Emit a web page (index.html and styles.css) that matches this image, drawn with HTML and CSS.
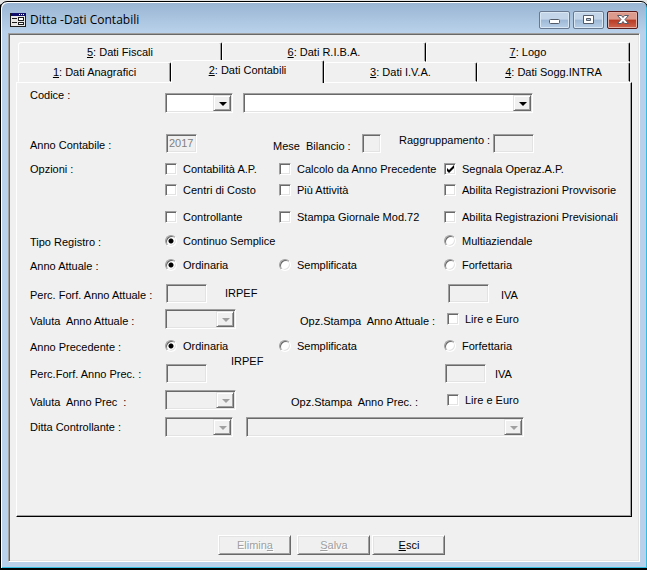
FILE: index.html
```html
<!DOCTYPE html>
<html lang="it">
<head>
<meta charset="utf-8">
<title>Ditta -Dati Contabili</title>
<link rel="stylesheet" href="styles.css">
</head>
<body>
<main class="window">
  <header class="titlebar">
    <svg class="app-icon" width="16" height="14" viewBox="0 0 16 14" shape-rendering="crispEdges" aria-hidden="true">
      <rect width="16" height="14" fill="#1c1c1c"/>
      <rect x="1" y="3" width="14" height="10" fill="#e8e8e8"/>
      <rect x="1" y="0" width="14" height="3" fill="#10106c"/>
      <path fill="#fff" d="M9 1h1v1H9zM11 1h1v1h-1zM13 1h1v1h-1z"/>
      <path fill="#1c1c1c" d="M2 5h5v1H2zM2 9h5v1H2zM8 4h6v4H8zM8 9h6v3H8z"/>
      <path fill="#fff" d="M9 5h4v2H9zM9 10h4v1H9z"/>
    </svg>
    <h1>Ditta -Dati Contabili</h1>
    <div class="caption-buttons">
      <button type="button" class="caption" aria-label="Riduci a icona">
        <svg width="29" height="16" viewBox="0 0 29 16"><rect x="9.500" y="7.500" width="10" height="4" rx="1" fill="#fff" stroke="#535a68"/></svg>
      </button>
      <button type="button" class="caption" aria-label="Ingrandisci">
        <svg width="29" height="16" viewBox="0 0 29 16"><path d="M9.500 3.500h10v8h-10zM12.500 6.500v2h4v-2z" fill="#fff" fill-rule="evenodd" stroke="#535a68"/></svg>
      </button>
      <button type="button" class="caption close" aria-label="Chiudi">
        <svg width="29" height="16" viewBox="0 0 29 16"><path d="M9.500 3.500h4l1.500 2 1.500-2h4l-3.500 4 3.500 4h-4l-1.500-2-1.500 2h-4l3.500-4z" fill="#fff" stroke="#535a68"/></svg>
      </button>
    </div>
  </header>

  <form class="client">
    <div class="tabs" role="tablist">
      <div class="tab-row">
        <button type="button" role="tab"><u>5</u>: Dati Fiscali</button>
        <button type="button" role="tab"><u>6</u>: Dati R.I.B.A.</button>
        <button type="button" role="tab"><u>7</u>: Logo</button>
      </div>
      <div class="tab-row front">
        <button type="button" role="tab"><u>1</u>: Dati Anagrafici</button>
        <button type="button" role="tab" class="active" aria-selected="true"><u>2</u>: Dati Contabili</button>
        <button type="button" role="tab"><u>3</u>: Dati I.V.A.</button>
        <button type="button" role="tab"><u>4</u>: Dati Sogg.INTRA</button>
      </div>
    </div>

    <section class="panel" role="tabpanel">
      <div class="row code">
        <label for="codice">Codice :</label>
        <span class="combo short"><select id="codice"><option></option></select></span>
        <span class="combo"><select aria-label="Descrizione ditta"><option></option></select></span>
      </div>

      <div class="row year">
        <label class="name" for="anno">Anno Contabile :</label>
        <input class="field small" id="anno" type="text" value="2017" disabled>
        <label class="low" for="mese">Mese  Bilancio :</label>
        <input class="field tiny" id="mese" type="text" disabled>
        <label class="high" for="ragg">Raggruppamento :</label>
        <input class="field" id="ragg" type="text" disabled>
      </div>

      <div class="row options">
        <span>Opzioni :</span>
        <label class="choice"><input type="checkbox">Contabilità A.P.</label>
        <label class="choice"><input type="checkbox">Calcolo da Anno Precedente</label>
        <label class="choice"><input type="checkbox" checked>Segnala Operaz.A.P.</label>
      </div>
      <div class="row options next">
        <span></span>
        <label class="choice"><input type="checkbox">Centri di Costo</label>
        <label class="choice"><input type="checkbox">Più Attività</label>
        <label class="choice"><input type="checkbox">Abilita Registrazioni Provvisorie</label>
      </div>
      <div class="row options last">
        <span></span>
        <label class="choice"><input type="checkbox">Controllante</label>
        <label class="choice"><input type="checkbox">Stampa Giornale Mod.72</label>
        <label class="choice"><input type="checkbox">Abilita Registrazioni Previsionali</label>
      </div>

      <div class="row radios register" role="radiogroup" aria-labelledby="registro">
        <span class="name" id="registro">Tipo Registro :</span>
        <label class="choice wide"><input type="radio" name="registro" checked>Continuo Semplice</label>
        <label class="choice"><input type="radio" name="registro">Multiaziendale</label>
      </div>
      <div class="row radios" role="radiogroup" aria-labelledby="attuale">
        <span class="name" id="attuale">Anno Attuale :</span>
        <label class="choice"><input type="radio" name="attuale" checked>Ordinaria</label>
        <label class="choice"><input type="radio" name="attuale">Semplificata</label>
        <label class="choice"><input type="radio" name="attuale">Forfettaria</label>
      </div>

      <div class="row percent">
        <label class="name" for="irpef1">Perc. Forf. Anno Attuale :</label>
        <input class="field" id="irpef1" type="text" disabled>
        <span class="unit">IRPEF</span>
        <input class="field" type="text" aria-label="IVA anno attuale" disabled>
        <span class="name">IVA</span>
      </div>
      <div class="row currency">
        <label class="name" for="valuta1">Valuta  Anno Attuale :</label>
        <span class="combo medium disabled"><select id="valuta1" disabled><option></option></select></span>
        <span class="name">Opz.Stampa  Anno Attuale :</span>
        <label class="choice"><input type="checkbox">Lire e Euro</label>
      </div>

      <div class="row radios previous" role="radiogroup" aria-labelledby="precedente">
        <span class="name" id="precedente">Anno Precedente :</span>
        <label class="choice"><input type="radio" name="precedente" checked>Ordinaria</label>
        <label class="choice"><input type="radio" name="precedente">Semplificata</label>
        <label class="choice"><input type="radio" name="precedente">Forfettaria</label>
      </div>
      <div class="row percent-previous">
        <label class="base" for="irpef2">Perc.Forf. Anno Prec. :</label>
        <input class="field" id="irpef2" type="text" disabled>
        <span class="unit">IRPEF</span>
        <input class="field flush" type="text" aria-label="IVA anno precedente" disabled>
        <span class="base">IVA</span>
      </div>
      <div class="row currency currency-previous">
        <label class="name" for="valuta2">Valuta  Anno Prec  :</label>
        <span class="combo medium disabled"><select id="valuta2" disabled><option></option></select></span>
        <span class="name">Opz.Stampa  Anno Prec. :</span>
        <label class="choice"><input type="checkbox">Lire e Euro</label>
      </div>
      <div class="row holding">
        <label for="controllante">Ditta Controllante :</label>
        <span class="combo short disabled"><select id="controllante" disabled><option></option></select></span>
        <span class="combo disabled"><select aria-label="Descrizione ditta controllante" disabled><option></option></select></span>
      </div>
    </section>

    <footer class="actions">
      <div class="edit">
        <button type="button" disabled>Elimin<u>a</u></button>
        <button type="button" disabled><u>S</u>alva</button>
      </div>
      <button type="button"><u>E</u>sci</button>
    </footer>
  </form>
</main>
</body>
</html>
```
FILE: styles.css
```css
:root {
  --face: #f0f0f0;
  --shadow: #a0a0a0;
  --dark: #696969;
  --light: #e3e3e3;
  --frame: #b9d1ea;
}

* {
  box-sizing: border-box;
}

body {
  margin: 0;
  padding-top: 1px;
  min-height: 100vh;
  display: flex;
  background: linear-gradient(#e4e4e4 4px, #000 5px);
  color: #000;
  font: 11px/14px "Liberation Sans", Arial, sans-serif;
}

button,
input,
select {
  margin: 0;
  font: inherit;
  color: inherit;
}

/* Window frame */
.window {
  flex: 1;
  display: flex;
  flex-direction: column;
  margin-bottom: 1px;
  padding: 0 6px 6px;
  border: 1px solid #000;
  border-radius: 7px 7px 0 0;
  background: linear-gradient(#98b4d2, var(--frame) 30px);
  box-shadow: inset 1px 1px 0 #fff, inset -1px -1px 0 #33bde0;
}

.titlebar {
  height: 30px;
  display: flex;
  align-items: center;
  gap: 4px;
  padding: 6px 3px 0;
}

.titlebar h1 {
  flex: 1;
  margin: 0;
  font: 12px/16px "Open Sans", "Noto Sans", sans-serif;
}

.caption-buttons {
  display: flex;
  gap: 3px;
}

.caption {
  width: 31px;
  height: 18px;
  padding: 0;
  border: 1px solid #68798f;
  border-radius: 2px;
  background: linear-gradient(#c3d5e9 45%, #9db8d5 50%, #b8cfe8);
  box-shadow: inset 0 0 0 1px #d9e6f4;
}

.caption svg {
  display: block;
}

.close {
  border-color: #5a1a1a;
  background: linear-gradient(#dc9a8c 45%, #b83a24 50%, #cf6550);
  box-shadow: inset 0 0 0 1px #e5b0a6;
}

.client {
  flex: 1;
  display: flex;
  flex-direction: column;
  margin: 1px 1px 0;
  padding: 7px 7px 5px;
  border: 1px solid;
  border-color: var(--shadow) #fff #fff var(--shadow);
  background: var(--face);
  box-shadow: inset 1px 1px 0 var(--dark), inset -1px -1px 0 var(--light);
}

/* Tabs */
.tabs {
  padding: 1px 2px 0;
}

.tab-row {
  display: flex;
  height: 20px;
}

.tab-row button {
  flex: 1;
  padding: 0;
  border: 1px solid;
  border-color: #fff #000 transparent #fff;
  border-radius: 3px 2px 0 0;
  background: var(--face);
  box-shadow: inset -1px 0 0 var(--shadow);
}

.tab-row .active {
  height: 23px;
  margin-top: -2px;
  padding-bottom: 4px;
  border-bottom: 0;
  z-index: 1;
}

.panel {
  flex: 1;
  padding: 5px 13px;
  border: 1px solid;
  border-color: #fff #000 #000 #fff;
  box-shadow: inset -1px -1px 0 var(--shadow);
}

/* Form rows */
.row {
  display: grid;
  align-items: center;
  min-height: 20px;
  white-space: pre;
}

.name {
  padding-top: 3px;
}

.base {
  padding-bottom: 2px;
}

.code {
  grid-template-columns: 135px 78px minmax(0, 290px);
  min-height: 25px;
  align-items: end;
}

.code label {
  align-self: start;
}

.year {
  grid-template-columns: 135px 108px 88px 38px 93px 1fr;
  margin-top: 20px;
}

.low {
  align-self: end;
}

.high {
  align-self: start;
}

.options,
.radios {
  grid-template-columns: 135px 114px 165px 1fr;
}

.options {
  margin-top: 6px;
}

.options.next {
  margin-top: 1px;
}

.options.last {
  margin-top: 7px;
}

.radios {
  min-height: 16px;
  margin-top: 7px;
}

.radios.register {
  margin-top: 5px;
}

.radios.previous {
  margin-top: 8px;
}

.wide {
  grid-column: span 2;
}

.percent {
  grid-template-columns: 135px 60px 222px 54px 1fr;
  margin-top: 10px;
}

.percent-previous {
  grid-template-columns: 135px 66px 214px 50px 1fr;
  min-height: 29px;
  align-items: end;
}

.percent-previous .unit {
  align-self: start;
}

.currency {
  grid-template-columns: 135px 135px 147px 1fr;
  margin-top: 6px;
}

.currency-previous {
  grid-template-columns: 135px 126px 156px 1fr;
  margin-top: 7px;
}

.holding {
  grid-template-columns: 135px 81px minmax(0, 278px);
  margin-top: 7px;
}

/* Controls */
.field,
.combo,
.choice input[type="checkbox"] {
  border: 1px solid;
  border-color: var(--shadow) #fff #fff var(--shadow);
  background: #fff;
  box-shadow: inset 1px 1px 0 var(--dark), inset -1px -1px 0 var(--light);
}

.field {
  width: 41px;
  height: 19px;
  margin-left: 1px;
  padding: 0 2px;
  border-radius: 0;
}

.field.small {
  width: 31px;
}

.field.tiny {
  width: 19px;
}

.field.flush {
  margin-left: 0;
}

.field:disabled {
  background: var(--face);
  color: #808080;
}

.combo {
  position: relative;
  display: block;
  height: 20px;
}

.combo.short {
  width: 68px;
}

.combo.medium {
  width: 71px;
}

.combo select {
  appearance: none;
  display: block;
  width: 100%;
  height: 100%;
  padding: 0 20px 0 4px;
  border: 0;
  background: transparent;
}

.combo::before {
  content: "";
  position: absolute;
  top: 1px;
  right: 1px;
  bottom: 1px;
  width: 16px;
  border: 1px solid;
  border-color: var(--light) var(--dark) var(--dark) var(--light);
  background: var(--face);
  box-shadow: inset 1px 1px 0 #fff, inset -1px -1px 0 var(--shadow);
  pointer-events: none;
}

.combo::after {
  content: "";
  position: absolute;
  top: 8px;
  right: 5px;
  border: 4px solid transparent;
  border-top-color: #000;
  border-bottom: 0;
  pointer-events: none;
}

.combo.disabled {
  background: var(--face);
}

.combo.disabled::after {
  border-top-color: var(--shadow);
}

.choice {
  display: flex;
  align-items: center;
  gap: 6px;
}

.choice input {
  appearance: none;
  flex: none;
  width: 12px;
  height: 12px;
}

.choice input[type="checkbox"]:checked {
  background: #fff url("data:image/svg+xml,%3Csvg xmlns='http://www.w3.org/2000/svg' viewBox='0 0 10 10'%3E%3Cpath d='M2 4v3l2 2 5-5V1L4 6z'/%3E%3C/svg%3E");
}

.choice input[type="radio"] {
  border: 1px solid;
  border-color: var(--shadow) #fff #fff var(--shadow);
  border-radius: 50%;
  background: #fff;
  box-shadow: inset 1px 1px 0 var(--dark), inset -1px -1px 0 var(--light);
}

.choice input[type="radio"]:checked {
  background: radial-gradient(circle, #000 2px, #fff 3px);
}

/* Bottom buttons */
.actions {
  display: flex;
  justify-content: center;
  gap: 2px;
  padding: 18px 0 0 16px;
  height: 39px;
}

.edit {
  display: flex;
  gap: 6px;
}

.actions button {
  width: 73px;
  height: 20px;
  padding: 0;
  border: 1px solid;
  border-color: #fff var(--dark) var(--dark) #fff;
  background: var(--face);
  box-shadow: inset 1px 1px 0 var(--light), inset -1px -1px 0 var(--shadow);
}

.actions button:disabled {
  color: var(--shadow);
  text-shadow: 1px 1px 0 #fff;
}
```
